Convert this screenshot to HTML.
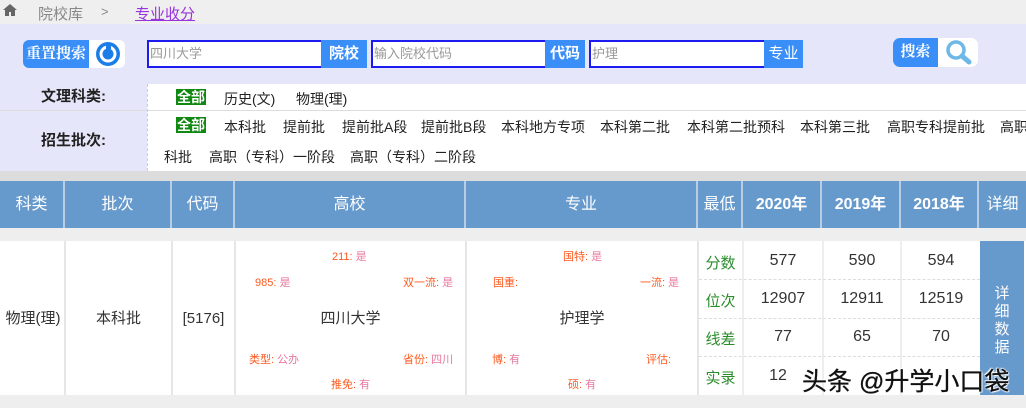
<!DOCTYPE html>
<html><head><meta charset="utf-8"><style>
*{margin:0;padding:0;box-sizing:border-box}
body{width:1026px;height:408px;overflow:hidden;position:relative;background:#fff;font-family:"Liberation Sans","Noto Sans CJK SC",sans-serif;color:#333}
.a{position:absolute;white-space:nowrap}
.top{left:0;top:0;width:1026px;height:24px;background:#efefef}
.sb{left:0;top:24px;width:1026px;height:60px;background:#e6e6fa}
.inp{position:absolute;height:28px;border:2px solid #1c1cf0;background:#fff;font-size:13px;color:#999;line-height:24px;padding-left:1px}
.btn{position:absolute;height:28px;background:#3a8ef7;color:#fff;font-size:15px;font-weight:bold;text-align:center;line-height:28px}
.lab{background:#e6e6fa;left:0;width:147px;font-size:15px;font-weight:bold;color:#222;text-align:center}
.it{font-size:14px;color:#222}
.sel{background:#118811;color:#fff;font-weight:bold;font-size:14px;line-height:15px;padding:0 1px}
.hd{position:absolute;top:181px;height:47px;background:#6699cc;color:#fff;font-size:16px;text-align:center;line-height:47px;border-right:2px solid #b8cde3}
.c{position:absolute;top:241px;height:154px;background:#fff;border-right:2px solid #e6e6e6;font-size:15px;text-align:center;line-height:156px;color:#333}
.k{color:#ff5a1f;font-size:11px}.v{color:#e6789f}
.sm{position:absolute;font-size:11px;white-space:nowrap}
.n{position:absolute;font-size:16px;text-align:center;color:#333}
.g{color:#2c8c2c}
</style></head><body>
<div class="a top"></div>
<svg class="a" style="left:3px;top:4px" width="14" height="12" viewBox="0 0 14 12"><path d="M7 0L0 6h2v6h4V8h2v4h4V6h2z" fill="#666"/></svg>
<div class="a" style="left:38px;top:3px;font-size:15px;color:#888">院校库</div>
<div class="a" style="left:101px;top:4px;font-size:13px;color:#888">&gt;</div>
<div class="a" style="left:135px;top:3px;font-size:15px;color:#9933dd;text-decoration:underline">专业收分</div>
<div class="a sb"></div>
<div class="a" style="left:23px;top:40px;width:102px;height:28px;background:#fff;border-radius:6px"></div>
<div class="a" style="left:23px;top:40px;width:66px;height:28px;background:#3a8ef7;border-radius:6px 0 0 6px;color:#fff;font-family:'Liberation Serif','Noto Serif CJK SC',serif;font-weight:bold;font-size:15px;line-height:28px;text-align:center">重置搜索</div>
<svg class="a" style="left:93px;top:40px" width="30" height="28" viewBox="0 0 30 28"><circle cx="15" cy="14" r="12" fill="#1a7de8"/><circle cx="15" cy="14" r="8.5" fill="#fff"/><circle cx="15" cy="14" r="5.5" fill="#1a7de8"/><rect x="13" y="3" width="5" height="6" fill="#1a7de8"/></svg>
<div class="inp" style="left:147px;top:40px;width:176px">四川大学</div>
<div class="btn" style="left:321px;top:40px;width:46px">院校</div>
<div class="inp" style="left:371px;top:40px;width:176px">输入院校代码</div>
<div class="btn" style="left:545px;top:40px;width:40px">代码</div>
<div class="inp" style="left:589px;top:40px;width:177px">护理</div>
<div class="btn" style="left:764px;top:40px;width:39px;font-weight:normal">专业</div>
<div class="a" style="left:893px;top:38px;width:85px;height:29px;background:#fff;border-radius:7px"></div>
<div class="a" style="left:893px;top:38px;width:45px;height:29px;background:#3a8ef7;border-radius:7px 0 0 7px;color:#fff;font-family:'Liberation Serif','Noto Serif CJK SC',serif;font-weight:bold;font-size:15px;line-height:29px;text-align:center">搜索</div>
<svg class="a" style="left:944px;top:38px" width="32" height="29" viewBox="0 0 32 29"><circle cx="12" cy="12" r="8" stroke="#6db8e6" stroke-width="3.5" fill="none"/><path d="M18 18l7 6" stroke="#6db8e6" stroke-width="5" stroke-linecap="round"/></svg>
<div class="a lab" style="top:84px;height:26px;line-height:26px">文理科类:</div>
<div class="a" style="left:0;top:110px;width:1026px;height:1px;background:#ddd"></div>
<div class="a lab" style="top:111px;height:60px;line-height:60px">招生批次:</div>
<div class="a" style="left:147px;top:84px;width:0;height:87px;border-left:1px dashed #ccc"></div>
<div class="a it" style="left:176px;top:89px"><span class="sel">全部</span></div>
<div class="a it" style="left:224px;top:89px">历史(文)</div>
<div class="a it" style="left:296px;top:89px">物理(理)</div>
<div class="a it" style="left:176px;top:117px"><span class="sel">全部</span></div>
<div class="a it" style="left:224px;top:117px">本科批</div>
<div class="a it" style="left:283px;top:117px">提前批</div>
<div class="a it" style="left:342px;top:117px">提前批A段</div>
<div class="a it" style="left:421px;top:117px">提前批B段</div>
<div class="a it" style="left:501px;top:117px">本科地方专项</div>
<div class="a it" style="left:600px;top:117px">本科第二批</div>
<div class="a it" style="left:687px;top:117px">本科第二批预科</div>
<div class="a it" style="left:800px;top:117px">本科第三批</div>
<div class="a it" style="left:887px;top:117px">高职专科提前批</div>
<div class="a it" style="left:1000px;top:117px">高职</div>
<div class="a it" style="left:164px;top:147px">科批</div>
<div class="a it" style="left:209px;top:147px">高职（专科）一阶段</div>
<div class="a it" style="left:350px;top:147px">高职（专科）二阶段</div>
<div class="a" style="left:0;top:171px;width:1026px;height:10px;background:#dcdcdc"></div>
<div class="a" style="left:0;top:228px;width:1026px;height:13px;background:#eee"></div>
<div class="a" style="left:0;top:395px;width:1026px;height:13px;background:#eee"></div>
<div class="a" style="left:0;top:181px;width:1026px;height:47px;background:#6699cc"></div>
<div class="hd" style="left:0;width:65px">科类</div>
<div class="hd" style="left:65px;width:107px">批次</div>
<div class="hd" style="left:172px;width:63px">代码</div>
<div class="hd" style="left:235px;width:231px">高校</div>
<div class="hd" style="left:466px;width:232px">专业</div>
<div class="hd" style="left:698px;width:45px">最低</div>
<div class="hd" style="left:743px;width:79px;font-weight:bold">2020年</div>
<div class="hd" style="left:822px;width:79px;font-weight:bold">2019年</div>
<div class="hd" style="left:901px;width:78px;font-weight:bold">2018年</div>
<div class="hd" style="left:979px;width:47px;border:none">详细</div>
<div class="c" style="left:2px;width:64px">物理(理)</div>
<div class="c" style="left:66px;width:107px">本科批</div>
<div class="c" style="left:173px;width:63px">[5176]</div>
<div class="c" style="left:236px;width:231px">四川大学</div>
<div class="c" style="left:467px;width:232px">护理学</div>
<div class="sm" style="left:332px;top:248px"><span class="k">211: </span><span class="v">是</span></div>
<div class="sm" style="left:255px;top:274px"><span class="k">985: </span><span class="v">是</span></div>
<div class="sm" style="left:403px;top:274px"><span class="k">双一流: </span><span class="v">是</span></div>
<div class="sm" style="left:249px;top:351px"><span class="k">类型: </span><span class="v">公办</span></div>
<div class="sm" style="left:403px;top:351px"><span class="k">省份: </span><span class="v">四川</span></div>
<div class="sm" style="left:331px;top:376px"><span class="k">推免: </span><span class="v">有</span></div>
<div class="sm" style="left:563px;top:248px"><span class="k">国特: </span><span class="v">是</span></div>
<div class="sm" style="left:493px;top:274px"><span class="k">国重: </span></div>
<div class="sm" style="left:640px;top:274px"><span class="k">一流: </span><span class="v">是</span></div>
<div class="sm" style="left:492px;top:351px"><span class="k">博: </span><span class="v">有</span></div>
<div class="sm" style="left:646px;top:351px"><span class="k">评估: </span></div>
<div class="sm" style="left:568px;top:376px"><span class="k">硕: </span><span class="v">有</span></div>
<div class="a" style="left:699px;top:241px;width:281px;height:154px;background:#fff"></div>
<div class="a" style="left:742px;top:241px;width:2px;height:154px;background:#eee"></div>
<div class="a" style="left:822px;top:241px;width:2px;height:154px;background:#eee"></div>
<div class="a" style="left:900px;top:241px;width:2px;height:154px;background:#eee"></div>
<div class="a" style="left:699px;top:279px;width:281px;border-top:1px dashed #ddd"></div>
<div class="a" style="left:699px;top:318px;width:281px;border-top:1px dashed #ddd"></div>
<div class="a" style="left:699px;top:356px;width:281px;border-top:1px dashed #ddd"></div>
<div class="n g" style="left:699px;width:43px;top:252px;font-size:15px">分数</div>
<div class="n g" style="left:699px;width:43px;top:290px;font-size:15px">位次</div>
<div class="n g" style="left:699px;width:43px;top:328px;font-size:15px">线差</div>
<div class="n g" style="left:699px;width:43px;top:367px;font-size:15px">实录</div>
<div class="n" style="left:744px;width:78px;top:252px">577</div>
<div class="n" style="left:824px;width:76px;top:252px">590</div>
<div class="n" style="left:902px;width:78px;top:252px">594</div>
<div class="n" style="left:744px;width:78px;top:290px">12907</div>
<div class="n" style="left:824px;width:76px;top:290px">12911</div>
<div class="n" style="left:902px;width:78px;top:290px">12519</div>
<div class="n" style="left:744px;width:78px;top:328px">77</div>
<div class="n" style="left:824px;width:76px;top:328px">65</div>
<div class="n" style="left:902px;width:78px;top:328px">70</div>
<div class="n" style="left:744px;width:68px;top:367px">12</div>
<div class="a" style="left:980px;top:241px;width:44px;height:154px;background:#6699cc;color:#fff;font-size:15px;text-align:center;line-height:18px;padding-top:44px;white-space:normal">详<br>细<br>数<br>据</div>
<div class="a" style="left:802px;top:362px;font-size:25px;color:#111;-webkit-text-stroke:0.3px #111;text-shadow:0 0 2px #fff,0 0 2px #fff,1px 1px 1px #fff,-1px -1px 1px #fff">头条 @升学小口袋</div>
</body></html>
